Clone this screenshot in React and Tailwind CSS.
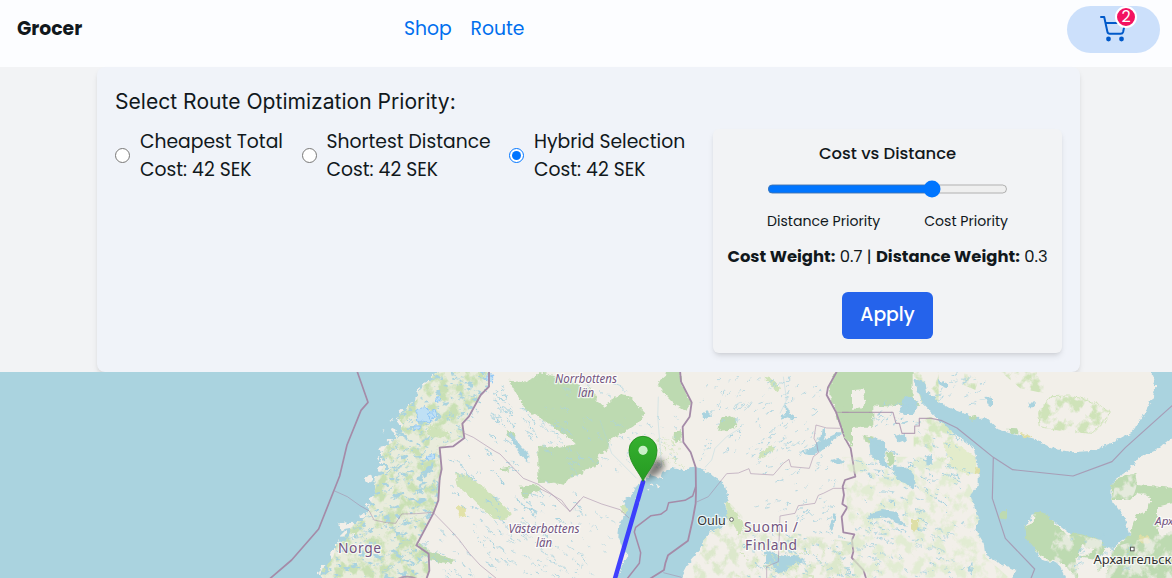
import React from "react";

const SEA = "#aad3df";
const LAND = "#f2efe9";
const FOREST = "#bddab1";
const SCRUB = "#cfe3b9";
const BORDER = "#a58ba8";

function createRandom(seed) {
  let s = seed;
  return () => {
    s = (s * 16807) % 2147483647;
    return s / 2147483647;
  };
}

/* Short wavy strokes scattered over a rectangle, used for lakes and streams. */
function scatter(seed, count, x, y, w, h, slope, size) {
  const r = createRandom(seed * 7919);
  let d = "";
  for (let i = 0; i < count; i++) {
    const px = x + r() * w;
    const py = y + r() * h;
    const len = size * (0.2 + r() * r() * 1.2);
    const dy = len * (slope + (r() - 0.5) * 0.9);
    d += `M${px.toFixed(1)} ${py.toFixed(1)}q${(len / 2).toFixed(1)} ${(dy * 0.1).toFixed(1)} ${len.toFixed(1)} ${dy.toFixed(1)}`;
  }
  return d;
}

function Lakes({ d, width = 3 }) {
  return <path d={d} fill="none" stroke={SEA} strokeWidth={width} strokeLinecap="round" filter="url(#soft)" />;
}

const NORWAY =
  "M555 0L540 30L505 60L500 90L470 110L440 140L460 165L440 190L420 215L395 245L400 290L370 330L375 370L362 400L350 430L310 465L290 490L260 520L250 560L215 600L205 640H535L535 550L500 525L550 430L565 390L575 300L570 235L640 200L640 160L690 80L717 50V0Z";

const haloText = { paintOrder: "stroke", stroke: "#ffffff", strokeOpacity: 0.75, strokeLinejoin: "round" };

function MapView() {
  return (
    <svg className="block h-[206px] w-full" viewBox="0 372 1172 206" preserveAspectRatio="none">
      <defs>
        <filter id="ragged" x="-5%" y="-5%" width="110%" height="110%">
          <feTurbulence type="fractalNoise" baseFrequency="0.05" numOctaves="4" seed="4" />
          <feDisplacementMap in="SourceGraphic" scale="48" xChannelSelector="R" yChannelSelector="G" />
        </filter>
        <filter id="soft" x="-5%" y="-5%" width="110%" height="110%">
          <feTurbulence type="fractalNoise" baseFrequency="0.07" numOctaves="3" seed="9" />
          <feDisplacementMap in="SourceGraphic" scale="16" xChannelSelector="R" yChannelSelector="G" />
        </filter>
        <filter id="speckle" x="0" y="0" width="100%" height="100%">
          <feTurbulence type="fractalNoise" baseFrequency="0.032 0.026" numOctaves="5" seed="12" />
          <feColorMatrix values="0 0 0 0 0  0 0 0 0 0  0 0 0 0 0  0 0 0 5 -2.25" />
          <feComposite in="SourceGraphic" operator="in" />
        </filter>
        <filter id="flecks" x="0" y="0" width="100%" height="100%">
          <feTurbulence type="fractalNoise" baseFrequency="0.04 0.06" numOctaves="4" seed="31" />
          <feColorMatrix values="0 0 0 0 0  0 0 0 0 0  0 0 0 0 0  0 12 0 0 -7.4" />
          <feComposite in="SourceGraphic" operator="in" />
        </filter>
        <filter id="pinShadow" x="-50%" y="-50%" width="200%" height="200%">
          <feGaussianBlur stdDeviation="3.2" />
        </filter>
        <linearGradient id="pinFill" x1="0" y1="0" x2="0" y2="1">
          <stop offset="0" stopColor="#35b02f" />
          <stop offset="1" stopColor="#269a22" />
        </linearGradient>
      </defs>

      <rect x="0" y="372" width="1172" height="206" fill={LAND} />

      {/* Norway and western Sweden */}
      <g transform="translate(250 370) scale(0.33333)">
        <path d={NORWAY} fill="#dbe9c8" fillOpacity=".4" />
        <path d={NORWAY} fill="#c9e0b4" filter="url(#speckle)" />
        <path d={NORWAY} fill={SEA} filter="url(#flecks)" />
        <path
          filter="url(#ragged)"
          fill={SEA}
          d="M-780 -30H560L540 30L505 55L500 90L470 110L440 140L460 165L440 190L420 215L395 245L400 290L370 330L375 370L362 400L350 430L310 465L290 490L260 520L250 560L215 600L195 660H-780Z"
        />
        <g fill={LAND} filter="url(#soft)">
          <path d="M345 322l14-8 10 6-2 14-12 6-8-8zM268 462l14-8 12 8 16 0 -4 14 -20 4 -14 4zM328 435l12-6 10 4-6 10-14 2zM425 180l12-6 4 10-10 6zM412 210l10-4 8 6-12 8zM440 155l12-4-2 10zM395 178l8 2-4 8zM300 495l14-4-6 12zM388 235l10-4 4 10-10 6zM380 262l8 0-2 10zM418 150l8-6 4 8z" />
        </g>
        <g filter="url(#soft)">
          <path
            fill={FOREST}
            d="M778 32L800 45L850 25L870 5L990 45V230L910 170L865 140L815 85ZM912 235L1000 225V310L910 335L865 340L875 270ZM812 350L865 342L875 360L845 368L825 390L815 380ZM770 180L795 190L790 210L775 200ZM500 515L540 545L615 570L605 582L540 570L515 545ZM745 295l30-4 2 14-20-2z"
          />
          <path fill={SCRUB} d="M615 310L650 315L690 345L735 380L785 430L770 445L735 450L700 420L660 380L625 350ZM540 165L570 180L600 190L570 205L530 195Z" />
          <path fill="#e2e2a8" d="M620 410l20-6 8 15-2 20-18 4-4-18zM838 50l30 4-4 12-20 0z" />
          <path d="M500 125l20-15 18 10 14 18-14 20-18-8-16 6zM530 130l24-10 8 14-16 20zM558 82l14-4-2 14-12 4zM492 168h16v10h-16zM530 258l24-6v14l-20 4zM706 15h22v24l-16-6zM690 4l14 0-4 10z" fill="#bfe0f5" stroke="#93c8f5" strokeWidth="3" />
          <path d="M515 310l20-20 20-10-15 30-20 15zM775 185l20 20 20 25 20 20 0 30-15-12-20-30z" fill={SEA} />
        </g>
        <Lakes d={scatter(71, 130, 590, 60, 400, 390, 0.85, 28)} />
        <Lakes d={scatter(72, 95, 550, 450, 440, 180, 0.8, 23)} width={2.5} />
        <Lakes d={scatter(73, 35, 290, 420, 240, 200, -0.7, 30)} width={2.5} />
        <Lakes d={scatter(74, 45, 400, 130, 150, 260, -0.7, 24)} width={3} />
        <Lakes d={scatter(75, 30, 720, 40, 60, 120, 0.8, 22)} />
        <g fill="none" stroke={BORDER} strokeLinejoin="round">
          <path strokeWidth="5" d="M320 0L354 97L333 121L291 225L269 318L206 477L125 570L55 630" />
          <path strokeWidth="5.5" d="M717 0V50L692 75L657 139L637 161L643 204L610 229L569 233L575 297L569 325L565 391L550 430L499 526L536 551L538 602L528 630" />
          <path strokeWidth="2.5" strokeOpacity=".65" d="M254 363L292 380L330 407L358 423L372 450L410 458L437 460L455 432L500 431L549 427L598 477L628 510L658 550L690 585L745 630M643 190L670 202L735 244L750 252L820 325L865 343L905 372L960 424L990 390" />
          <path strokeWidth="5" strokeOpacity=".8" d="M440 628Q470 612 505 628" />
        </g>
      </g>

      {/* Sweden, the Gulf of Bothnia and Finland */}
      <g transform="translate(540 370) scale(0.33333)">
        <path d="M500 400H570L640 470L960 520V640H430L485 540Z" fill="#d4e6c2" filter="url(#speckle)" fillOpacity=".75" />
        <g filter="url(#soft)">
          <path
            fill={FOREST}
            d="M-92 32L-20 40L0 20L50 50L80 65L150 55L190 110L240 72L265 76L316 130L285 168L250 190L208 212L205 240L178 252L170 292L125 300L100 310L70 345L-5 325V228L55 232L110 222L85 180L30 145L-40 125ZM352 40L375 20L380 0H420L425 40L450 95L440 125L400 100L375 75ZM540 150L560 132L585 145L595 165L565 180L535 182ZM402 185L425 180V215L400 210ZM890 0H1000V125H890L870 80L865 50ZM885 125H1000V170H935V215L915 205Z"
          />
          <path fill={LAND} d="M170 70l30 10-5 30-25-20zM0 175l35 0 15 20-30 15-20-5zM940 60l30-2 6 40-15 18-22-4z" />
          <path fill={SCRUB} d="M555 385L568 405L590 430L612 470L600 495L580 465L562 440ZM240 405l22 0 5 35-18-8zM690 225l15 12-20 18-30 10 5-15zM670 20l25 5 25 30-10 12-20-25zM475 300l30 6 10 18-20 2z" />
        </g>
        <path
          filter="url(#soft)"
          fill={SEA}
          d="M308 338L330 315L365 325L370 305L400 295L430 300L470 292L495 300L520 318L555 345L562 380L555 405L565 440L545 475L510 485L490 510L485 535L450 575L425 624V650H225L245 590L262 555L245 530L235 500L238 460L265 420L250 390L275 375L285 350Z"
        />
        <path filter="url(#soft)" fill={LAND} d="M288 385l14 2-4 14-10-6zM348 345l10 4-8 6zM318 358l10-2-2 8zM330 340l8 2-4 6zM300 362l8 2-4 8z" />
        <Lakes d={scatter(81, 100, 480, 20, 370, 250, -0.8, 18)} width={2.4} />
        <Lakes d={scatter(82, 65, 640, 210, 250, 250, -0.6, 20)} width={2.5} />
        <Lakes d={scatter(83, 90, 610, 480, 330, 144, 0.5, 20)} width={3} />
        <Lakes d={scatter(84, 50, 0, 40, 230, 270, 0.7, 26)} width={2.2} />
        <Lakes d={scatter(85, 35, 240, 140, 170, 150, 0.8, 12)} width={2} />
        <Lakes d={scatter(86, 35, 0, 410, 225, 200, 0.8, 13)} width={2} />
        <g fill={SEA} filter="url(#soft)">
          <path d="M720 150l15-20-2-30 10 14 6 16 20 12-15 10-10-10zM780 245l35-8 25-25 5-35 10 0-2 35 25 5-25 20-35 18zM850 210l40-20 20 0-40 28zM675 550l15-8 25 12 20 5 40-3 20 15-35 12-20 18-30 8-10-20-25-12zM868 470l15-40 8 2-14 50zM485 130l20-6 12 12-25 14zM870 270l25-6 20 10-20 10z" />
        </g>
        <g fill="none" stroke={SCRUB} strokeWidth="2.5" filter="url(#soft)">
          <path d={scatter(89, 65, 590, 540, 330, 84, 0.6, 15)} />
          <path d={scatter(90, 50, 330, 200, 90, 90, 0.6, 14)} />
        </g>
        <g fill="none" stroke={SEA} strokeWidth="1.5" strokeOpacity=".8">
          <path d="M355 80Q350 140 358 200L365 290M600 175L560 200L525 235L515 270L495 292M720 130L740 90L730 20M180 150L215 250L290 325" />
        </g>
        <g fill="none" stroke={BORDER} strokeLinejoin="round">
          <path strokeWidth="5.5" d="M420 0L423 35L455 97L449 140L428 170L430 217L452 247L467 292L468 365L467 400L458 450L444 512L384 556L376 580L372 600L330 626" />
          <path strokeWidth="4.5" d="M467 350L458 378L435 391L386 398L380 420L362 433L333 437L287 472L283 486L302 548L298 580L260 628" />
          <path strokeWidth="5.5" d="M893 0L864 52L860 75L888 126L915 205L932 235L946 320L915 330L908 350L912 375L907 402L922 412L905 440L910 487L943 493L936 510L940 545L935 563L970 600L980 630" />
          <path strokeWidth="2.5" strokeOpacity=".65" d="M0 356L28 370L65 391L90 425L130 380L185 402L240 419L268 445M470 396L505 380L560 311L595 309L627 296L632 311L700 315L730 280L747 268L753 290L808 295L820 260L835 249L830 220L822 205L828 165L860 174L900 175M920 355L880 355L850 370L835 376L825 400L775 407L765 430L720 438L718 490L715 575L680 590V630M888 127H990M370 608L425 622" />
        </g>
      </g>

      {/* Karelia, the White Sea and Arkhangelsk */}
      <g transform="translate(842 370) scale(0.33333)">
        <path d="M0 260H340L410 400L430 560L520 640H40Z" fill="#dcebcb" filter="url(#speckle)" fillOpacity=".7" />
        <path fill="#d6e8c2" filter="url(#speckle)" d="M215 155L265 140L330 165L350 230L400 260L410 305L380 315L320 285L245 250L215 235Z" />
        <g filter="url(#soft)">
          <path fill={FOREST} d="M0 0H212V80L235 108L175 105L150 110L80 105V170H30V230L10 205L0 170L24 125L0 110ZM65 195L95 200L90 225L70 215ZM132 248L155 250L158 275L140 290ZM495 176L525 178L530 190L510 190Z" />
          <path fill={LAND} d="M30 60l35-2 5 40-15 18h-25z" />
          <path fill="#e3eccb" d="M300 215L350 225L400 262L408 305L380 315L330 290Z" />
        </g>
        <path fill={SCRUB} filter="url(#speckle)" d="M625 80L680 78L740 90L805 125L795 145L750 190L690 188L640 180L595 170L590 130ZM470 0H605V70L535 55ZM210 0H290V100H240ZM355 5L410 25L400 60L365 45Z" />
        <path fill="none" stroke={SCRUB} strokeWidth="3" filter="url(#soft)" d="M625 80L680 78L740 90L805 125L795 145L750 190L700 185M590 130L595 170L640 180M625 80L590 130" />
        <path
          filter="url(#soft)"
          fill={SEA}
          d="M215 25L250 38L255 65L285 90L320 112L365 128L395 145L430 142L465 175L530 195L580 208L630 235L690 247L745 243L810 218L870 185L905 135L930 90L940 50L920 -20H1030V170L945 238L890 262L860 300L820 328L805 365L815 400L848 440L862 500L840 510L810 538L745 520L690 495L640 455L580 425L550 470L570 520L600 570L650 580L680 640H505L520 600L465 575L430 555L425 520L400 480L410 450L385 375L410 345L410 290L395 235L350 200L285 145L240 100Z"
        />
        <g filter="url(#soft)">
          <path fill={FOREST} d="M578 422L610 430L640 460L675 498L700 488L775 510L790 540L770 560L785 590L740 624H700L665 580L620 570L595 555L550 500L548 470L575 458ZM820 330L880 308L885 345L1010 355V640H785L815 540L865 490L880 440L925 400L920 375L885 370L870 390H812L808 355ZM380 140l20-6 5 14-15 4zM475 425l20-5v25l-12 8-12-12z" />
          <path fill={LAND} d="M860 390L900 370L925 385L920 420L885 435L870 465L830 400ZM945 410L990 400V480L960 500L945 470ZM720 525l35 12-15 20-30 0zM700 560l60 10 10 60h-60z" />
          <path fill="#dedfa6" d="M208 450l20 0 2 30-15 5-8-15zM535 185l35 15-25 5zM400 295l15 0-2 18-12-4zM890 500l30-5 5 20-25 5z" />
          <path fill={SEA} d="M80 205l40 5 15 25-5 25-20 15-25-20zM95 240l25 20 25 35-30-10zM150 285l20 5 25 0 25 30-5 40-25-20-30-10zM85 430l35-10 40 5 15 25 20 20-30-8-25-20-60 5zM185 85l25-5 15 20-10 35-25 0-15-10zM560 98l22-1-5 15-18 0zM428 75l22 10 0 25-10-5zM250 260l20-8 0 25-15 10zM290 30l25 10 0 14-22-8zM380 600l8-30 2 50zM158 198l30-8 4 22-20 8z" />
        </g>
        <path fill="#f2efe9" fillOpacity=".75" filter="url(#speckle)" d="M820 330L880 308L885 345L870 390H812ZM640 480L780 510V624H700L620 560ZM785 540L990 480V640H785Z" />
        <Lakes d={scatter(91, 110, 35, 180, 330, 300, 0.45, 24)} width={3} />
        <Lakes d={scatter(92, 75, 40, 470, 350, 154, 0.3, 20)} width={2.5} />
        <Lakes d={scatter(93, 30, 90, 100, 130, 70, -0.6, 20)} width={3} />
        <Lakes d={scatter(94, 22, 280, 15, 140, 90, -0.4, 18)} width={2.4} />
        <Lakes d={scatter(95, 28, 680, 500, 190, 100, -0.6, 18)} width={2.5} />
        <g fill="none" stroke={BORDER} strokeLinejoin="round">
          <path strokeWidth="3.5" strokeOpacity=".75" d="M0 127H153L162 160H172L180 190H218V168H232V145H268L300 152L345 174L454 262L512 299L693 318L810 275L850 233L995 103M454 262L451 385L490 505L578 597L565 630" />
        </g>
      </g>

      {/* Place names */}
      <g fontFamily="'Noto Sans', sans-serif" textAnchor="middle" fill="#735480" {...haloText} strokeWidth="2.5">
        <g fontSize="11.7" fontStyle="italic">
          <text x="586" y="382.5" textLength="62" lengthAdjust="spacingAndGlyphs">Norrbottens</text>
          <text x="586" y="396.5" textLength="16" lengthAdjust="spacingAndGlyphs">län</text>
          <text x="544" y="532.5" textLength="71" lengthAdjust="spacingAndGlyphs">Västerbottens</text>
          <text x="544" y="546.5" textLength="16" lengthAdjust="spacingAndGlyphs">län</text>
          <text x="1155" y="525" textAnchor="start">Арх</text>
        </g>
        <g fontSize="13.8">
          <text x="359.5" y="553" textLength="43">Norge</text>
          <text x="771" y="531.5" textLength="54">Suomi /</text>
          <text x="771" y="549.5" textLength="52">Finland</text>
        </g>
        <g fontSize="12.6" fill="#333333">
          <text x="711.5" y="525" textLength="28.5" lengthAdjust="spacingAndGlyphs">Oulu</text>
          <text x="1093.5" y="564" textAnchor="start" textLength="78" lengthAdjust="spacingAndGlyphs">Архангельск</text>
        </g>
      </g>
      <circle cx="731.5" cy="519.5" r="1.9" fill="#fff" stroke="#666" strokeWidth="1" />
      <rect x="1130.5" y="547.2" width="3.6" height="3.6" fill="#fff" stroke="#555" strokeWidth="1" />

      {/* Route line and start marker */}
      <path d="M643 482L614 582" stroke="#3333ff" strokeOpacity=".93" strokeWidth="4.5" strokeLinecap="round" />
      <path d="M643 481L651 464Q657 456 663 461Q667 468 656 475Z" fill="#000" fillOpacity=".5" filter="url(#pinShadow)" />
      <path
        d="M643 481.3C640.5 473.5 629 463.5 629 450.3A14 14 0 0 1 657 450.3C657 463.5 645.5 473.5 643 481.3Z"
        fill="url(#pinFill)"
        stroke="#228c1d"
        strokeWidth=".9"
      />
      <circle cx="643" cy="450.3" r="4.6" fill="#c9efc7" />
    </svg>
  );
}

function CartIcon() {
  return (
    <svg className="h-7 w-7" viewBox="0 0 28 28" fill="none" stroke="#0059c9" strokeWidth="2" strokeLinecap="round" strokeLinejoin="round">
      <path d="M2 3H5.2L8.4 17.8Q8.8 19.8 10.8 19.8H21.6Q23.6 19.8 24.1 18L26 9H6.5" />
      <circle cx="9.5" cy="25" r="1.4" fill="#0059c9" />
      <circle cx="22.5" cy="25" r="1.4" fill="#0059c9" />
    </svg>
  );
}

const options = [
  { name: "Cheapest Total", width: "w-[143px]", gap: "mr-[18.5px]" },
  { name: "Shortest Distance", width: "w-[164px]", gap: "mr-[18.5px]" },
  { name: "Hybrid Selection", width: "w-[151px]", gap: "mr-0", selected: true },
];

export default function App() {
  return (
    <div className="h-[578px] overflow-hidden bg-[#f2f3f5] font-['Poppins','Inter',sans-serif] text-[#11181c]">
      <header className="flex h-[67px] items-start justify-between bg-[#fcfdff] pr-3 pl-[17px]">
        <div className="w-[387px] pt-[15px] text-[18.75px] leading-7 font-bold">Grocer</div>
        <nav className="flex flex-1 gap-[18.5px] pt-[15px] text-[18.75px] leading-7 text-[#006fee]">
          <a className="w-12">Shop</a>
          <a>Route</a>
        </nav>
        <button className="mt-1.5 flex h-[47px] w-[93px] items-center justify-center rounded-full bg-[#cce0fb]">
          <span className="relative -mt-[3px] -ml-px flex">
            <CartIcon />
            <span className="absolute -top-2 left-4 flex size-[22px] items-center justify-center rounded-full border-2 border-white bg-[#f31260] text-base leading-none text-white">
              2
            </span>
          </span>
        </button>
      </header>

      <section className="mr-[92px] ml-[97px] flex h-[305px] flex-col rounded-lg bg-[#f0f3f9] px-[18px] pt-[19px] shadow-md">
        <h2 className="font-['Inter',sans-serif] text-[21.1px] leading-8">Select Route Optimization Priority:</h2>
        <div className="mt-[11px] flex items-start justify-between">
          <div className="-mt-px flex">
            {options.map((o) => (
              <label key={o.name} className={`flex items-center ${o.gap}`}>
                <input type="radio" name="priority" defaultChecked={o.selected} className="mr-[10px] mb-[2px] size-[15px] accent-[#0075ff]" />
                <span className={`${o.width} text-[18.75px] leading-7 whitespace-nowrap`}>
                  {o.name}
                  <br />
                  Cost: 42 SEK
                </span>
              </label>
            ))}
          </div>
          <div className="flex h-[224px] w-[349px] flex-col items-center rounded-md bg-[#f2f3f5] pt-[13px] shadow-md">
            <h3 className="text-[16.4px] leading-6 font-medium">Cost vs Distance</h3>
            <input type="range" min="0" max="1" step="0.1" defaultValue="0.7" className="mt-[12px] h-4 w-[214px] accent-[#0075ff] [zoom:1.125]" />
            <div className="mt-[13px] flex w-[241px] justify-between text-[14.1px] leading-5">
              <span>Distance Priority</span>
              <span>Cost Priority</span>
            </div>
            <p className="mt-[14px] text-[16.4px] leading-6 whitespace-nowrap">
              <b>Cost Weight:</b> 0.7 | <b>Distance Weight:</b> 0.3
            </p>
            <button className="mt-[23px] h-[47px] w-[91px] rounded-md bg-[#2563eb] text-[18.75px] font-medium text-white">Apply</button>
          </div>
        </div>
      </section>

      <MapView />
    </div>
  );
}
